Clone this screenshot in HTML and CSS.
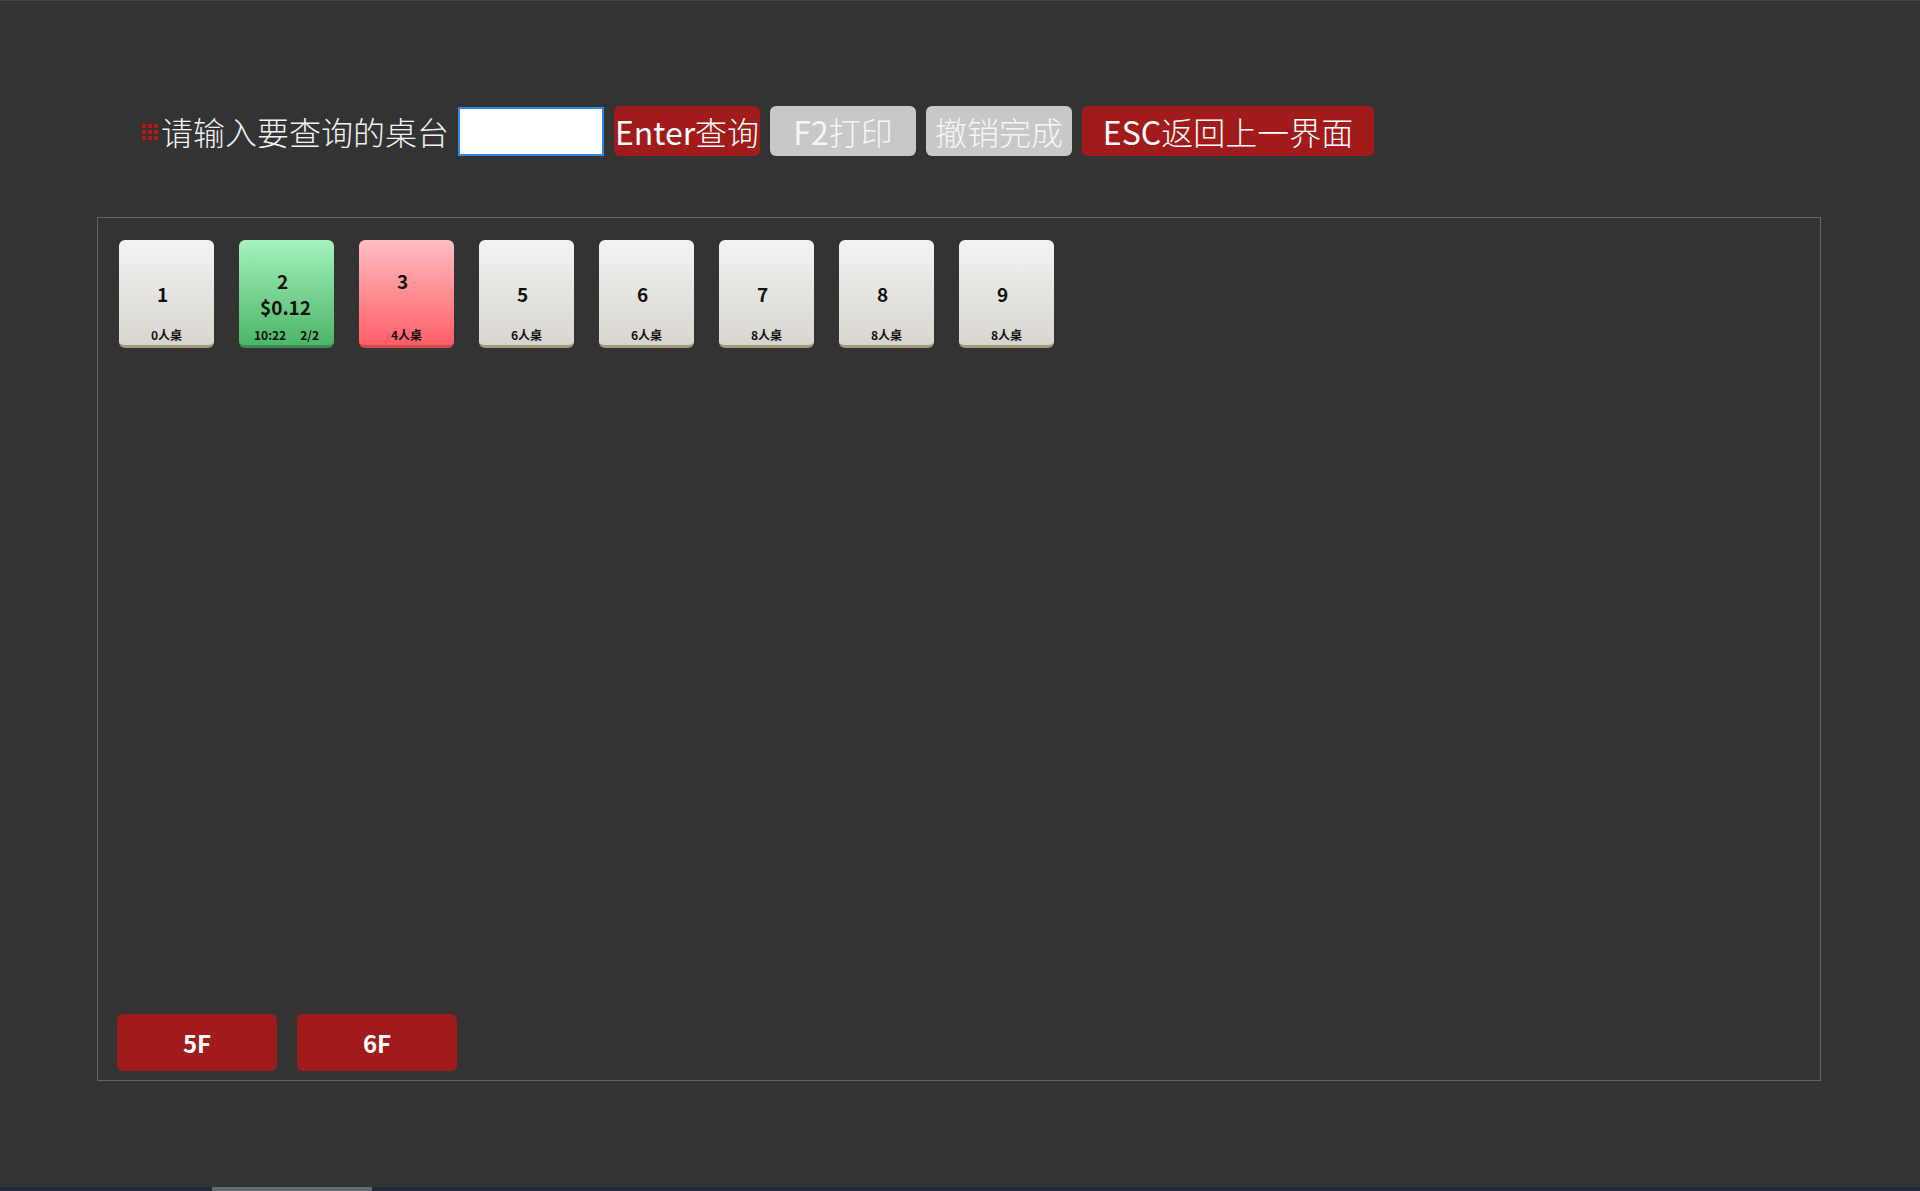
FILE: index.html
```html
<!DOCTYPE html>
<html lang="zh-CN">
<head>
    <meta charset="UTF-8">
    <meta name="viewport" content="width=device-width, initial-scale=1.0">
    <title>桌台查询</title>
    <link rel="stylesheet" href="styles.css">
</head>
<body>
    <div class="toolbar">
        <span class="dots">
            <i></i><i></i><i></i>
            <i></i><i></i><i></i>
            <i></i><i></i><i></i>
        </span>
        <span class="label">请输入要查询的桌台</span>
        <input type="text" class="search" id="tableNo">
        <button class="btn red">Enter<span class="zh">查询</span></button>
        <button class="btn gray">F2<span class="zh">打印</span></button>
        <button class="btn gray"><span class="zh">撤销完成</span></button>
        <button class="btn red wide">ESC<span class="zh">返回上一界面</span></button>
    </div>

    <div class="panel">
        <div class="tables">
            <div class="table">
                <div class="main"><div class="num">1</div></div>
                <div class="foot">0人桌</div>
            </div>
            <div class="table busy">
                <div class="main"><div class="num">2</div><div class="amount">$0.12</div></div>
                <div class="foot"><span>10:22</span><span>2/2</span></div>
            </div>
            <div class="table wait">
                <div class="main"><div class="num">3</div><div class="amount"></div></div>
                <div class="foot">4人桌</div>
            </div>
            <div class="table">
                <div class="main"><div class="num">5</div></div>
                <div class="foot">6人桌</div>
            </div>
            <div class="table">
                <div class="main"><div class="num">6</div></div>
                <div class="foot">6人桌</div>
            </div>
            <div class="table">
                <div class="main"><div class="num">7</div></div>
                <div class="foot">8人桌</div>
            </div>
            <div class="table">
                <div class="main"><div class="num">8</div></div>
                <div class="foot">8人桌</div>
            </div>
            <div class="table">
                <div class="main"><div class="num">9</div></div>
                <div class="foot">8人桌</div>
            </div>
        </div>

        <div class="floors">
            <button class="floor">5F</button>
            <button class="floor">6F</button>
        </div>
    </div>

    <div class="taskbar"><span class="task"></span></div>
</body>
</html>
```

FILE: styles.css
```css
html, body {
    height: 100%;
}
body {
    margin: 0;
    background-color: #333333;
    border-top: 1px solid #444444;
    box-sizing: border-box;
    display: flex;
    flex-direction: column;
    font-family: "Noto Sans CJK SC", "Noto Sans", sans-serif;
    color: #fff;
}
.toolbar {
    display: flex;
    align-items: center;
    height: 50px;
    margin: 105px 0 0 142px;
}
.dots {
    display: grid;
    grid-template-columns: repeat(3, 4px);
    grid-auto-rows: 4px;
    gap: 2px;
    margin-right: 3px;
    margin-top: 2px;
}
.dots i {
    background-color: #b31a1a;
}
.label {
    font-size: 32px;
    font-weight: 300;
    line-height: 50px;
    color: #f2f2f2;
    margin-right: 9px;
}
.search {
    width: 146px;
    height: 49px;
    box-sizing: border-box;
    border: 2px solid #2a8be0;
    background: #fff;
    margin: 0 10px 0 0;
    padding: 0 4px;
    outline: none;
}
.btn {
    width: 146px;
    height: 50px;
    border: none;
    border-radius: 6px;
    margin-right: 10px;
    padding: 0;
    font-family: "Noto Sans CJK SC", sans-serif;
    font-size: 32px;
    font-weight: 400;
    line-height: 50px;
    color: #fff;
    cursor: pointer;
}
.btn .zh {
    font-weight: 300;
}
.btn.red {
    background-color: #a11b1b;
}
.btn.gray {
    background-color: #c8c8c8;
    color: #f6f6f6;
}
.btn.wide {
    width: 292px;
}
.panel {
    width: 1724px;
    height: 864px;
    box-sizing: border-box;
    margin: 61px 0 0 97px;
    border: 1px solid #646464;
    padding: 22px 0 9px 19px;
    display: flex;
    flex-direction: column;
    justify-content: space-between;
}
.tables {
    display: flex;
    gap: 25px;
    padding-left: 2px;
}
.table {
    width: 95px;
    height: 108px;
    box-sizing: border-box;
    border-radius: 6px;
    background: linear-gradient(#f3f3f3, #d9d6cf);
    border-bottom: 3px solid #a6977a;
    display: grid;
    grid-template-areas: "cell";
    color: #111;
    font-weight: bold;
}
.table.busy {
    background: linear-gradient(#a3f3bd, #4db568);
    border-bottom-color: #3b8c4f;
}
.table.wait {
    background: linear-gradient(#ffbdc1, #ff5f67);
    border-bottom-color: #d44a51;
}
.main {
    grid-area: cell;
    align-self: center;
    text-align: center;
    margin-top: 3px;
}
.num {
    font-size: 19px;
    line-height: 26px;
    padding-right: 8px;
}
.amount {
    font-size: 19px;
    line-height: 26px;
    height: 26px;
    padding-right: 2px;
}
.foot {
    grid-area: cell;
    align-self: end;
    display: flex;
    justify-content: center;
    gap: 14px;
    font-size: 12px;
    line-height: 16px;
    margin-bottom: 2px;
}
.floors {
    display: flex;
    gap: 20px;
}
.floor {
    width: 160px;
    height: 57px;
    border: none;
    border-radius: 6px;
    background-color: #a11b1b;
    color: #fff;
    font-family: "Noto Sans CJK SC", sans-serif;
    font-weight: bold;
    font-size: 24px;
    cursor: pointer;
}
.taskbar {
    margin-top: auto;
    height: 4px;
    background-color: #1d2b3b;
    display: flex;
}
.task {
    width: 160px;
    margin-left: 212px;
    background-color: #5b6b6f;
}
```
